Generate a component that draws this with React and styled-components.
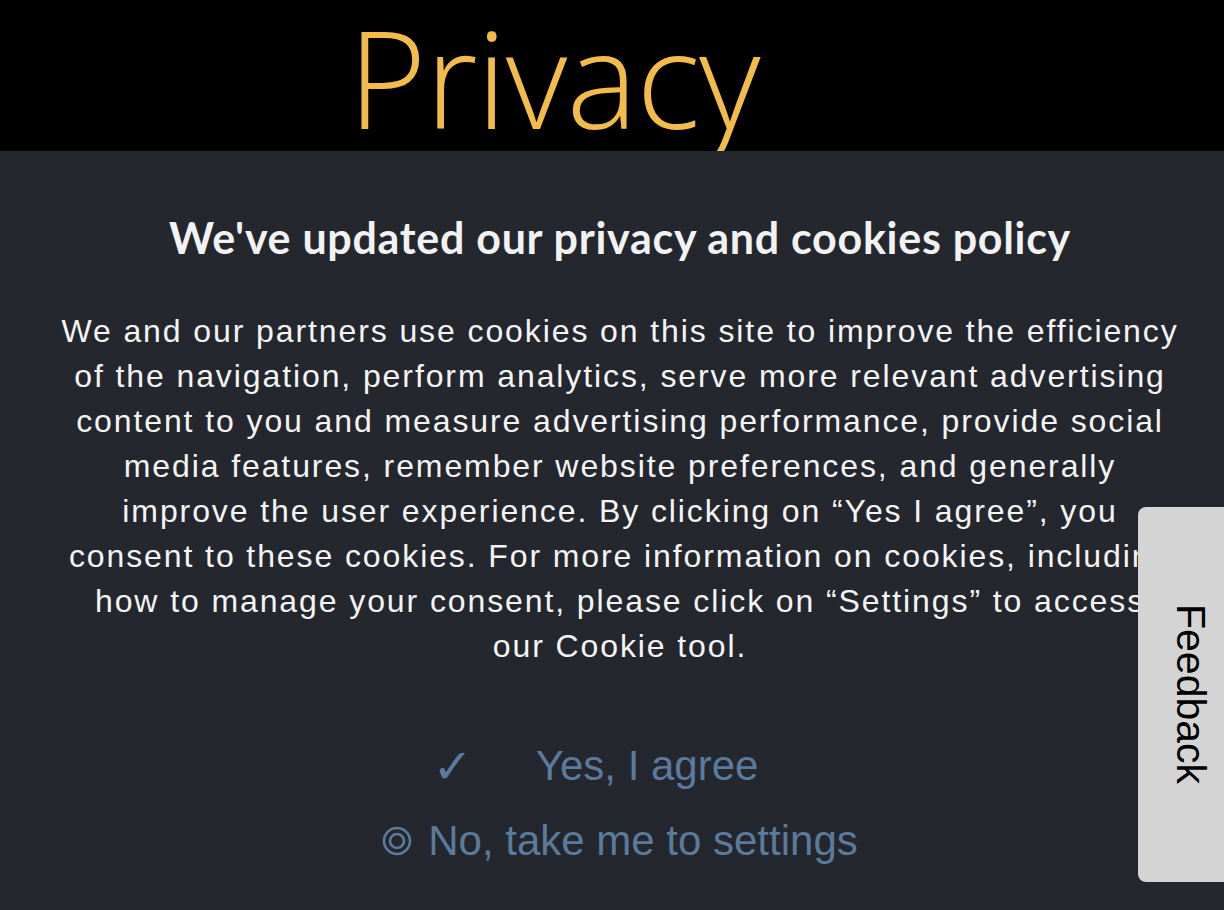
import React from "react";
import styled, { createGlobalStyle } from "styled-components";

const Global = createGlobalStyle`
  html, body { margin: 0; padding: 0; }
  body { background: #24272e; overflow: hidden; }
`;

const Page = styled.div`
  position: relative;
  width: 1224px;
  height: 910px;
  background: #24272e;
  overflow: hidden;
`;

const Header = styled.header`
  height: 151px;
  background: #000;
  overflow: hidden;
  padding-left: 348px;
  box-sizing: border-box;
`;

const Title = styled.h1`
  margin: 0;
  padding-top: 10px;
  font-family: "Open Sans", sans-serif;
  font-weight: 300;
  font-size: 134px;
  line-height: 1;
  color: #f3bb4a;
  letter-spacing: -1px;
`;

const Panel = styled.section`
  display: flex;
  flex-direction: column;
  align-items: center;
  padding: 62px 32px 0 48px;
`;

const Heading = styled.h2`
  margin: 0;
  font-family: Lato, sans-serif;
  font-weight: 700;
  font-size: 43px;
  line-height: 50px;
  letter-spacing: 0.7px;
  color: #f2f2f2;
`;

const Body = styled.p`
  margin: 46px 0 0;
  font-family: "Liberation Sans", Arial, sans-serif;
  font-size: 32px;
  line-height: 45px;
  letter-spacing: 1.9px;
  color: #f4f4f4;
  text-align: center;
  white-space: nowrap;
`;

const Actions = styled.div`
  display: flex;
  flex-direction: column;
  align-items: center;
  gap: 25px;
  margin-top: 72px;
`;

const Action = styled.button`
  display: flex;
  align-items: center;
  gap: ${(p) => p.$gap}px;
  padding: 0 ${(p) => p.$padRight || 0}px 0 0;
  border: 0;
  background: none;
  font-family: "Liberation Sans", Arial, sans-serif;
  font-size: 42px;
  line-height: 50px;
  color: #5b7b9c;
  cursor: pointer;
`;

const Check = styled.span`
  font-family: "DejaVu Sans", sans-serif;
  font-size: 48px;
  line-height: 50px;
`;

const Feedback = styled.div`
  position: absolute;
  right: 0;
  top: 507px;
  width: 86px;
  height: 375px;
  box-sizing: border-box;
  padding-left: 18px;
  background: #d4d4d4;
  border-radius: 8px 0 0 8px;
  display: flex;
  align-items: center;
  justify-content: center;
  writing-mode: vertical-rl;
  font-family: "Liberation Sans", Arial, sans-serif;
  font-size: 41px;
  color: #000;
`;

const Target = () => (
  <svg width="30" height="30" viewBox="0 0 30 30" aria-hidden="true">
    <circle cx="15" cy="15" r="13" fill="none" stroke="currentColor" strokeWidth="2.6" />
    <circle cx="15" cy="15" r="7" fill="none" stroke="currentColor" strokeWidth="2.6" />
  </svg>
);

export default function App() {
  return (
    <Page>
      <Global />
      <Header>
        <Title>Privacy</Title>
      </Header>
      <Panel>
        <Heading>We've updated our privacy and cookies policy</Heading>
        <Body>
          We and our partners use cookies on this site to improve the efficiency
          <br />
          of the navigation, perform analytics, serve more relevant advertising
          <br />
          content to you and measure advertising performance, provide social
          <br />
          media features, remember website preferences, and generally
          <br />
          improve the user experience. By clicking on “Yes I agree”, you
          <br />
          consent to these cookies. For more information on cookies, including
          <br />
          how to manage your consent, please click on “Settings” to access
          <br />
          our Cookie tool.
        </Body>
        <Actions>
          <Action $gap={63} $padRight={49}>
            <Check>✓</Check>
            <span>Yes, I agree</span>
          </Action>
          <Action $gap={16}>
            <Target />
            <span>No, take me to settings</span>
          </Action>
        </Actions>
      </Panel>
      <Feedback>Feedback</Feedback>
    </Page>
  );
}
